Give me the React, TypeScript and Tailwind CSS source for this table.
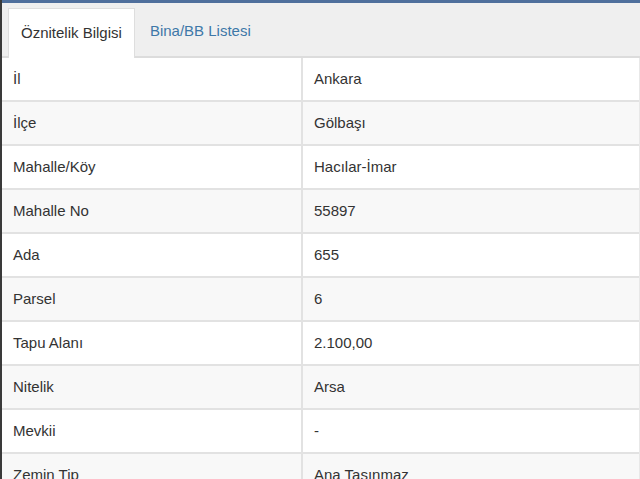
const rows: [string, string][] = [
  ['İl', 'Ankara'],
  ['İlçe', 'Gölbaşı'],
  ['Mahalle/Köy', 'Hacılar-İmar'],
  ['Mahalle No', '55897'],
  ['Ada', '655'],
  ['Parsel', '6'],
  ['Tapu Alanı', '2.100,00'],
  ['Nitelik', 'Arsa'],
  ['Mevkii', '-'],
  ['Zemin Tip', 'Ana Taşınmaz'],
];

export default function App() {
  return (
    <div
      className="h-[479px] w-[640px] overflow-hidden border-l-2 border-[#3a3a3a] bg-white text-[15px] text-[#333]"
      style={{ fontFamily: '"Liberation Sans", Arial, sans-serif' }}
    >
      <div className="h-[3px] bg-[#4f6f9c]" />
      {/* sekmeler */}
      <div className="flex h-[55px] items-end border-b-2 border-[#dcdcdc] bg-[#efefef] pl-[6px]">
        <div className="-mb-[2px] flex h-[50px] items-center border border-b-0 border-[#dedede] bg-white px-[12px]">
          Öznitelik Bilgisi
        </div>
        <div className="flex h-[50px] items-center px-[15px] text-[#3e78a8]">Bina/BB Listesi</div>
      </div>

      {/* tablo */}
      <div className="border-r border-[#e8e8e8]">
        {rows.map(([k, v], i) => (
          <div
            key={k}
            className={`grid h-[44px] grid-cols-[301px_minmax(0,1fr)] border-b-2 border-[#e2e2e2] ${i % 2 === 1 ? 'bg-[#f8f8f8]' : 'bg-white'}`}
          >
            <div className="flex items-center border-r-2 border-[#e2e2e2] pl-[11px]">{k}</div>
            <div className="flex items-center pl-[11px]">{v}</div>
          </div>
        ))}
      </div>
    </div>
  );
}
